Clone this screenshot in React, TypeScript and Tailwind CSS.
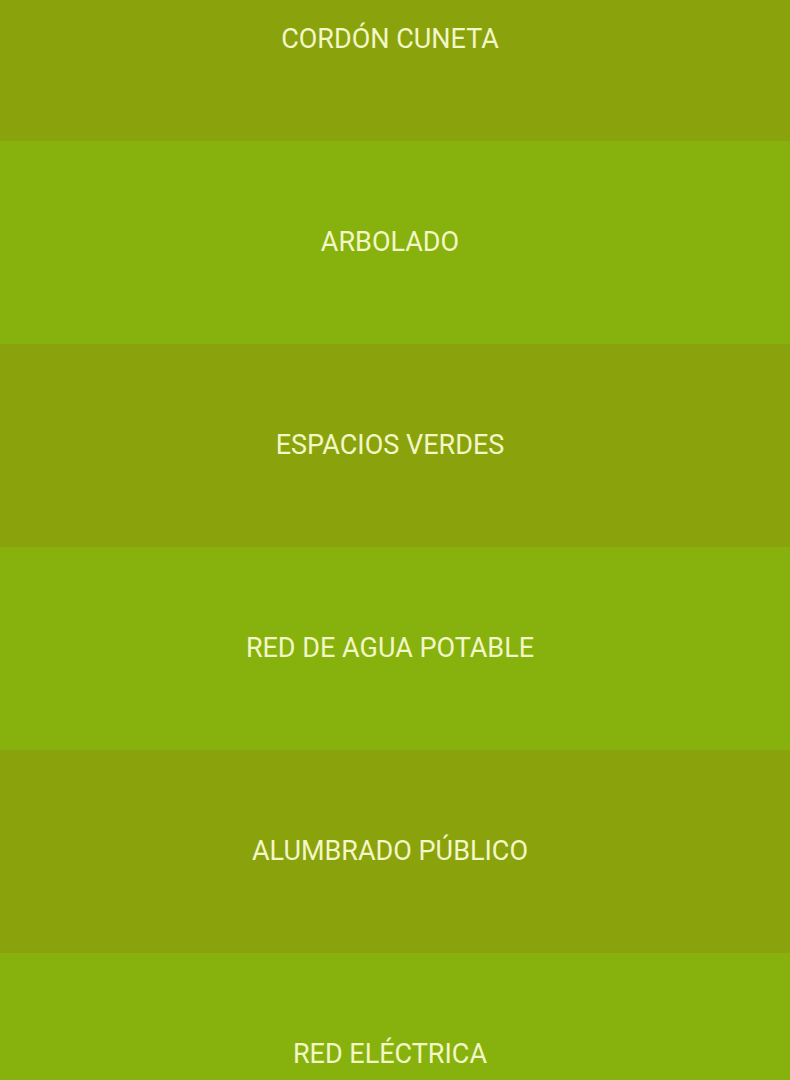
import React from 'react';

const items = [
  'CORDÓN CUNETA',
  'ARBOLADO',
  'ESPACIOS VERDES',
  'RED DE AGUA POTABLE',
  'ALUMBRADO PÚBLICO',
  'RED ELÉCTRICA',
];

export default function App() {
  return (
    <div className="h-[1080px] w-[790px] overflow-hidden bg-[#87b20e]" style={{ fontFamily: 'Roboto, "Noto Sans", sans-serif' }}>
      <div className="-mt-[62px] flex flex-col">
        {items.map((label, i) => (
          <div
            key={label}
            className={`flex h-[203px] items-center justify-center pr-[10px] ${i % 2 === 0 ? 'bg-[#8aa30c]' : 'bg-[#87b20e]'}`}
          >
            <span className="text-[27px] text-[#f3f6c6]">{label}</span>
          </div>
        ))}
      </div>
    </div>
  );
}
